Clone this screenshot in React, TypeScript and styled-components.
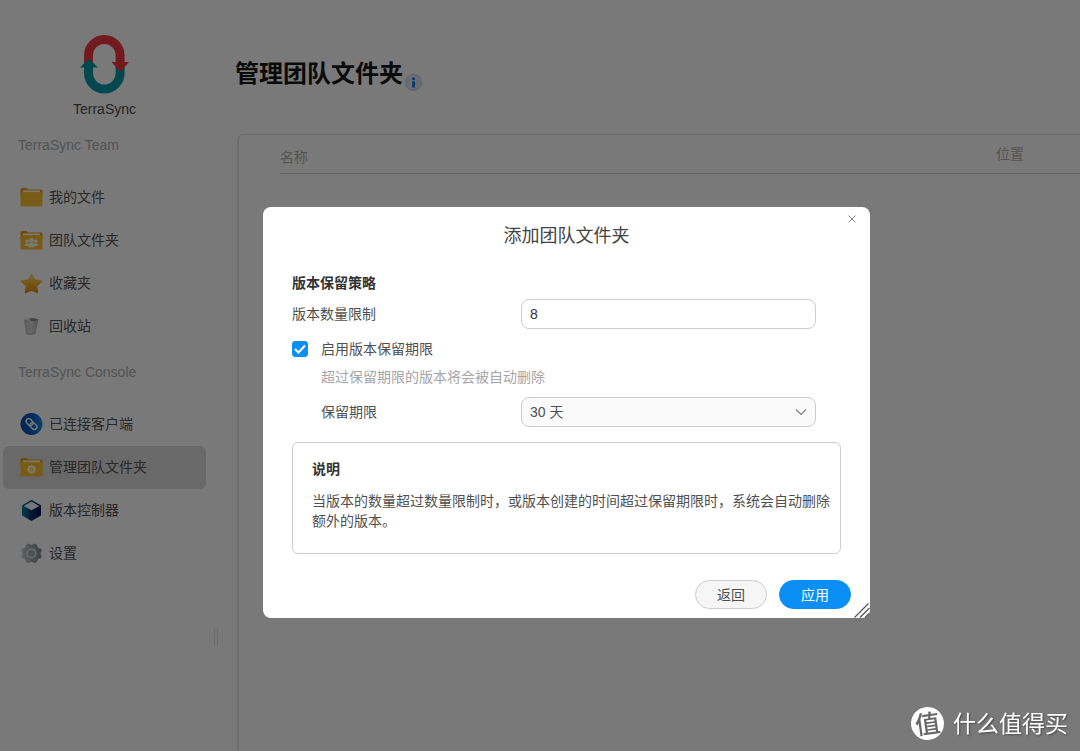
import React, { useState } from "react";
import styled, { createGlobalStyle } from "styled-components";

const GlobalStyle = createGlobalStyle`
  *, *::before, *::after { box-sizing: border-box; }
  body {
    margin: 0;
    background: #f2f2f2;
    color: #505050;
    font: 14px/20px "Liberation Sans", "Noto Sans CJK SC", sans-serif;
  }
  h1, h2, h3, p, ul { margin: 0; padding: 0; }
  button, input, select { font: inherit; color: inherit; margin: 0; }
`;

const Page = styled.div`
  display: flex;
  min-height: 100vh;
  overflow: hidden;
`;

const Sidebar = styled.aside`
  flex: 0 0 214px;
  padding: 34px 8px 0 3px;
`;

const Brand = styled.div`
  display: flex;
  flex-direction: column;
  align-items: center;
  gap: 4px;
  color: #4a4a4a;
`;

const GroupLabel = styled.h2<{ $first?: boolean }>`
  margin: ${(p) => (p.$first ? "16px" : "14px")} 0 21px;
  padding-left: 15px;
  font-size: 14px;
  font-weight: 400;
  line-height: 20px;
  color: #a8a8a8;
`;

const NavList = styled.ul`
  list-style: none;
`;

const NavLink = styled.a<{ $active?: boolean }>`
  display: flex;
  align-items: center;
  gap: 6px;
  height: 43px;
  padding: 0 0 2px 17px;
  border-radius: 6px;
  color: #505050;
  text-decoration: none;
  background: ${(p) => (p.$active ? "#d2d2d2" : "transparent")};
`;

const Splitter = styled.div`
  flex: 0 0 4px;
  height: 16px;
  margin-top: 629px;
  border: solid #d6d6d6;
  border-width: 0 1px;
`;

const Main = styled.main`
  flex: 1;
  min-width: 0;
  display: flex;
  flex-direction: column;
  padding: 56px 0 0 19px;
`;

const PageHeading = styled.header`
  display: flex;
  align-items: flex-end;
  gap: 2px;
  height: 35px;
  margin: 0 0 43px -2px;
`;

const PageTitle = styled.h1`
  font-size: 24px;
  line-height: 35px;
  color: #141414;
`;

const Panel = styled.section`
  flex: 1;
  border: solid #dcdcdc;
  border-width: 1px 0 0 2px;
  border-top-left-radius: 6px;
  padding-left: 41px;
`;

const FolderTable = styled.table`
  width: 100%;
  border-collapse: collapse;
  color: #a8a8a8;
  th {
    height: 38px;
    padding: 0;
    border-bottom: 1px solid #cccccc;
    font-weight: 400;
    text-align: left;
  }
`;

const NameHead = styled.th`
  vertical-align: bottom;
  && { padding-bottom: 6px; }
`;

const PlaceHead = styled.th`
  width: 84px;
`;

const Overlay = styled.div`
  position: fixed;
  inset: 0;
  display: flex;
  align-items: center;
  justify-content: center;
  padding: 74px 0 0 53px;
  background: rgba(0, 0, 0, 0.5);
`;

const Dialog = styled.form`
  position: relative;
  width: 607px;
  padding: 0 29px 9px;
  border-radius: 8px;
  background: #fff;
`;

const DialogTitle = styled.h2`
  margin-bottom: 6px;
  font-size: 18px;
  font-weight: 400;
  line-height: 58px;
  text-align: center;
  color: #444;
`;

const CloseButton = styled.button`
  position: absolute;
  top: 4px;
  right: 10px;
  display: grid;
  place-items: center;
  width: 16px;
  height: 16px;
  padding: 0;
  border: 0;
  background: none;
`;

const SectionTitle = styled.h3`
  font-size: 14px;
  line-height: 24px;
  color: #333;
`;

const FieldRow = styled.div<{ $gap: number; $indent?: boolean }>`
  display: grid;
  grid-template-columns: ${(p) => (p.$indent ? "200px" : "229px")} 295px;
  align-items: center;
  margin-top: ${(p) => p.$gap}px;
  padding-left: ${(p) => (p.$indent ? "29px" : "0")};
`;

const TextInput = styled.input`
  width: 100%;
  height: 30px;
  padding: 0 8px;
  border: 1px solid #cdcdcd;
  border-radius: 8px;
  background: #fff;
  color: #333;
  outline: none;
`;

const Stack = styled.span`
  display: grid;
  align-items: center;
  > * { grid-area: 1 / 1; }
  > svg { pointer-events: none; }
`;

const Dropdown = styled.select`
  appearance: none;
  width: 100%;
  height: 30px;
  padding: 0 8px;
  border: 1px solid #cdcdcd;
  border-radius: 8px;
  background: #fafafa;
  color: #505050;
  outline: none;
`;

const Chevron = styled.svg`
  justify-self: end;
  margin-right: 9px;
`;

const CheckLabel = styled.label`
  display: flex;
  align-items: center;
  gap: 13px;
  height: 24px;
  margin-top: 8px;
`;

const CheckBox = styled.input`
  appearance: none;
  width: 16px;
  height: 16px;
  border: 1px solid #cdcdcd;
  border-radius: 3px;
  background: #fff;
  &:checked { border-color: #0b8ff5; background: #0b8ff5; }
`;

const Hint = styled.p`
  margin-top: 4px;
  padding-left: 29px;
  line-height: 24px;
  color: #a6a6a6;
`;

const Notice = styled.section`
  margin-top: 15px;
  padding: 16px 8px 22px 19px;
  border: 1px solid #cdcdcd;
  border-radius: 6px;
  h3 { font-size: 14px; line-height: 20px; margin-bottom: 12px; color: #333; }
`;

const Actions = styled.footer`
  display: flex;
  justify-content: flex-end;
  gap: 12px;
  margin: 26px -10px 0 0;
`;

const PillButton = styled.button<{ $primary?: boolean }>`
  width: 72px;
  height: 29px;
  padding: 0;
  border: 1px solid ${(p) => (p.$primary ? "#0b8ff5" : "#cdcdcd")};
  border-radius: 15px;
  background: ${(p) => (p.$primary ? "#0b8ff5" : "#f6f6f6")};
  color: ${(p) => (p.$primary ? "#fff" : "#505050")};
`;

const Grip = styled.svg`
  position: absolute;
  right: 0;
  bottom: 0;
`;

const Watermark = styled.div`
  position: fixed;
  right: 12px;
  bottom: 11px;
  display: flex;
  align-items: center;
  gap: 9px;
  color: #fff;
  font-family: "Noto Sans CJK SC", sans-serif;
  font-size: 23px;
  line-height: 32px;
  text-shadow: 1px 1px 2px rgba(0, 0, 0, 0.4);
`;

const WatermarkText = styled.span`
  padding-bottom: 2px;
`;

const Seal = styled.span`
  width: 33px;
  height: 33px;
  border-radius: 50%;
  background: #fff;
  color: #666;
  font-size: 25px;
  font-weight: 500;
  line-height: 30px;
  text-align: center;
  text-shadow: none;
  transform: rotate(-8deg);
`;

const Logo = () => (
  <svg width="49" height="61" viewBox="0 0 49 61" aria-hidden="true">
    <path d="M8.500 32V21.500a15.800 16 0 0 1 31.600 0V31" fill="none" stroke="#e7343f" strokeWidth="9" />
    <path d="M8.500 31V39a15.800 16 0 0 0 31.600 0V31" fill="none" stroke="#06919f" strokeWidth="9" />
    <path d="M31.500 28H49L40.300 38z" fill="#e7343f" />
    <path d="M0 33.500h18L8.800 24.500z" fill="#06919f" />
  </svg>
);

const Folder = ({ children }: { children?: React.ReactNode }) => (
  <svg width="23" height="22" viewBox="0 0 23 22" aria-hidden="true">
    <path d="M.5 3.500Q.5 2 2 2H6.500L8 3.500H21Q22.500 3.500 22.500 5V10H.5z" fill="#e0961c" />
    <rect x="3" y="4.500" width="17" height="2" fill="#fff5d8" />
    <path d="M.5 6.500H22.500V19Q22.500 20.500 21 20.500H2Q.5 20.500 .5 19z" fill="#efb92b" />
    {children}
  </svg>
);

const TeamFolder = () => (
  <Folder>
    <g fill="#f5f0e0">
      <circle cx="7.200" cy="12" r="1.800" />
      <circle cx="15.800" cy="12" r="1.800" />
      <circle cx="11.500" cy="11.300" r="2.400" />
      <path d="M4.800 17Q4.800 14 7.200 14Q9 14 9 17zM14 17Q14 14 15.800 14Q18.200 14 18.200 17z" />
      <path d="M7.800 16.500Q7.800 13.700 11.500 13.700Q15.200 13.700 15.200 16.500Q15.200 18.500 11.500 18.500Q7.800 18.500 7.800 16.500z" />
    </g>
  </Folder>
);

const ManageFolder = () => (
  <Folder>
    <g stroke="#fbf3d7" fill="none">
      <path d="M11.500 9V17.800M7.100 13.400H15.900M8.400 10.300L14.600 16.500M14.600 10.300L8.400 16.500" strokeWidth="1.800" />
      <circle cx="11.500" cy="13.400" r="2.700" strokeWidth="1.600" fill="#efb92b" />
    </g>
    <circle cx="11.500" cy="13.400" r="1" fill="#fbf3d7" />
  </Folder>
);

const Star = () => (
  <svg width="23" height="22" viewBox="0 0 23 22" aria-hidden="true">
    <defs>
      <linearGradient id="star" x1="0" y1="0" x2="0" y2="1">
        <stop offset="0" stopColor="#e8cc7c" />
        <stop offset=".45" stopColor="#edb02c" />
        <stop offset="1" stopColor="#d9821c" />
      </linearGradient>
    </defs>
    <path d="M11.500 2.500l2.800 5.700 6.800 1-5 4.700 1.200 6.300-5.800-2.400-5.800 2.400 1.200-6.300-5-4.700 6.800-1z" fill="url(#star)" stroke="url(#star)" strokeWidth="2" strokeLinejoin="round" />
  </svg>
);

const Bin = () => (
  <svg width="23" height="22" viewBox="0 0 23 22" aria-hidden="true">
    <defs>
      <linearGradient id="bin">
        <stop offset="0" stopColor="#b4b4b4" />
        <stop offset=".5" stopColor="#d0d0d0" />
        <stop offset="1" stopColor="#a8a8a8" />
      </linearGradient>
    </defs>
    <path d="M4 4.500L6 18.500Q10.500 21 15.500 18.500L18.500 4.500z" fill="url(#bin)" />
    <path d="M4 4.500Q10 1.500 18.500 4.500Q12 8 4 4.500z" fill="#dadada" />
    <path d="M9 3.500Q14 2.500 18.500 4.500Q15 6.500 11 6z" fill="#858585" />
    <path d="M6.300 18.300Q11 20 15.500 18.300" fill="none" stroke="#a4a4a4" strokeWidth="1" />
  </svg>
);

const Link = () => (
  <svg width="23" height="22" viewBox="0 0 23 22" aria-hidden="true">
    <defs>
      <linearGradient id="link">
        <stop offset="0" stopColor="#0846a4" />
        <stop offset=".55" stopColor="#0b55b9" />
        <stop offset="1" stopColor="#1e88dc" />
      </linearGradient>
    </defs>
    <circle cx="11.500" cy="11" r="11" fill="url(#link)" />
    <g fill="none" stroke="#e3edf7" strokeWidth="1.500" transform="rotate(45 11.500 11)">
      <rect x="5" y="8.400" width="7.500" height="5.200" rx="2.600" />
      <rect x="10.500" y="8.400" width="7.500" height="5.200" rx="2.600" />
    </g>
  </svg>
);

const Cube = () => (
  <svg width="23" height="22" viewBox="0 0 23 22" aria-hidden="true">
    <defs>
      <linearGradient id="cube">
        <stop offset="0" stopColor="#097f8e" />
        <stop offset=".5" stopColor="#082f68" />
        <stop offset="1" stopColor="#050d50" />
      </linearGradient>
    </defs>
    <path d="M11.500 1L21 6.300V16.500L11.500 22 2 16.500V6.300z" fill="url(#cube)" />
    <path d="M11.500 2.500L19.300 6.900 11.500 11.300 3.700 6.900z" fill="#e8eef2" />
  </svg>
);

const Gear = () => (
  <svg width="23" height="22" viewBox="0 0 23 22" aria-hidden="true">
    <defs>
      <linearGradient id="gear" gradientUnits="userSpaceOnUse" x1="2" y1="0" x2="21" y2="0">
        <stop offset="0" stopColor="#b8c2c4" />
        <stop offset="1" stopColor="#76868a" />
      </linearGradient>
    </defs>
    <path
      d="M8.700 1.500L10.200 2.600H12.800L14.300 1.500L17 2.700L17.300 4.500L18.900 6.200L20.800 6.400L21.800 9.300L20.500 10.800V12.200L21.800 13.700L20.700 16.400L18.900 16.600L17.300 18.200L17 20L14.300 21.200L12.800 20.100H10.200L8.700 21.200L6 20L5.700 18.200L4.100 16.600L2.300 16.400L1.200 13.700L2.500 12.200V10.800L1.200 9.300L2.200 6.400L4.100 6.200L5.700 4.500L6 2.700z"
      fill="url(#gear)"
    />
    <circle cx="11.500" cy="11.400" r="4.200" fill="#98a4a7" stroke="#d3d9da" strokeWidth="1.600" />
  </svg>
);

const InfoIcon = () => (
  <svg width="17" height="17" viewBox="0 0 17 17" role="img" aria-label="info">
    <circle cx="8.500" cy="8.500" r="8" fill="#d3dae2" stroke="#b9c4d0" />
    <circle cx="8.500" cy="4.800" r="1.500" fill="#0a6fe0" />
    <rect x="7.200" y="7.200" width="2.800" height="6.300" rx=".6" fill="#0a6fe0" />
  </svg>
);

const teamItems = [
  { label: "我的文件", icon: <Folder /> },
  { label: "团队文件夹", icon: <TeamFolder /> },
  { label: "收藏夹", icon: <Star /> },
  { label: "回收站", icon: <Bin /> },
];

const consoleItems = [
  { label: "已连接客户端", icon: <Link /> },
  { label: "管理团队文件夹", icon: <ManageFolder />, active: true },
  { label: "版本控制器", icon: <Cube /> },
  { label: "设置", icon: <Gear /> },
];

type Item = { label: string; icon: React.ReactNode; active?: boolean };

const Nav = ({ items }: { items: Item[] }) => (
  <NavList>
    {items.map((item) => (
      <li key={item.label}>
        <NavLink href="#" $active={item.active}>
          {item.icon}
          <span>{item.label}</span>
        </NavLink>
      </li>
    ))}
  </NavList>
);

export default function App() {
  const [limit, setLimit] = useState("8");
  const [enabled, setEnabled] = useState(true);

  return (
    <>
      <GlobalStyle />
      <Page>
        <Sidebar>
          <Brand>
            <Logo />
            <span>TerraSync</span>
          </Brand>
          <GroupLabel $first>TerraSync Team</GroupLabel>
          <Nav items={teamItems} />
          <GroupLabel>TerraSync Console</GroupLabel>
          <Nav items={consoleItems} />
        </Sidebar>
        <Splitter />
        <Main>
          <PageHeading>
            <PageTitle>管理团队文件夹</PageTitle>
            <InfoIcon />
          </PageHeading>
          <Panel>
            <FolderTable>
              <thead>
                <tr>
                  <NameHead>名称</NameHead>
                  <PlaceHead>位置</PlaceHead>
                </tr>
              </thead>
            </FolderTable>
          </Panel>
        </Main>
      </Page>
      <Overlay>
        <Dialog role="dialog" aria-labelledby="dialog-title" onSubmit={(e) => e.preventDefault()}>
          <DialogTitle id="dialog-title">添加团队文件夹</DialogTitle>
          <CloseButton type="button" aria-label="关闭">
            <svg width="8" height="8" viewBox="0 0 8 8">
              <path d="M.5 .5l7 7M7.500 .5l-7 7" stroke="#888" />
            </svg>
          </CloseButton>
          <SectionTitle>版本保留策略</SectionTitle>
          <FieldRow $gap={4}>
            <label htmlFor="limit">版本数量限制</label>
            <TextInput id="limit" value={limit} onChange={(e) => setLimit(e.target.value)} />
          </FieldRow>
          <CheckLabel>
            <Stack>
              <CheckBox type="checkbox" checked={enabled} onChange={(e) => setEnabled(e.target.checked)} />
              <svg width="16" height="16" viewBox="0 0 16 16" aria-hidden="true">
                <path d="M3 8l3.500 3.500L13 4.500" fill="none" stroke="#fff" strokeWidth="2" />
              </svg>
            </Stack>
            启用版本保留期限
          </CheckLabel>
          <Hint>超过保留期限的版本将会被自动删除</Hint>
          <FieldRow $gap={8} $indent>
            <label htmlFor="period">保留期限</label>
            <Stack>
              <Dropdown id="period" disabled={!enabled}>
                <option>30 天</option>
              </Dropdown>
              <Chevron width="12" height="8" viewBox="0 0 12 8" aria-hidden="true">
                <path d="M1 1.500l5 5 5-5" fill="none" stroke="#808080" strokeWidth="1.200" />
              </Chevron>
            </Stack>
          </FieldRow>
          <Notice>
            <h3>说明</h3>
            <p>当版本的数量超过数量限制时，或版本创建的时间超过保留期限时，系统会自动删除额外的版本。</p>
          </Notice>
          <Actions>
            <PillButton type="button">返回</PillButton>
            <PillButton type="submit" $primary>应用</PillButton>
          </Actions>
          <Grip width="16" height="16" viewBox="0 0 16 16" aria-hidden="true">
            <path d="M.5 15.500L14.500 1.500M6 15.500L15.500 6M11 15.500L15 11.500" fill="none" stroke="#555" strokeWidth="1.200" />
          </Grip>
        </Dialog>
      </Overlay>
      <Watermark>
        <Seal>值</Seal>
        <WatermarkText>什么值得买</WatermarkText>
      </Watermark>
    </>
  );
}
